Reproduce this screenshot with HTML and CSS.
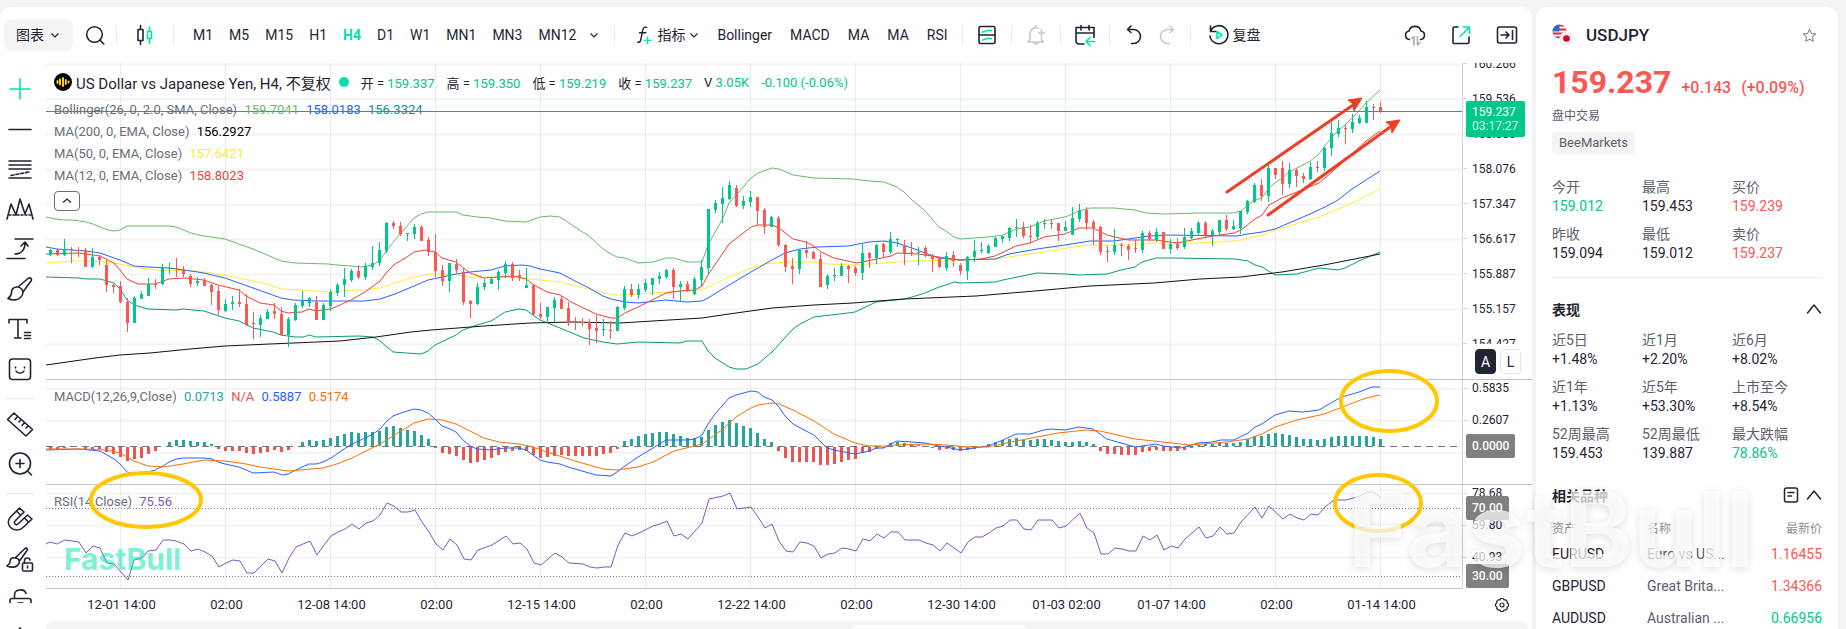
FILE: index.html
```html
<!DOCTYPE html>
<html lang="zh-CN">
<head>
  <meta charset="UTF-8" />
  <meta name="viewport" content="width=device-width, initial-scale=1.0"/>
  <title>USDJPY | FastBull</title>
  <link rel="stylesheet" href="styles.css">
</head>
<body>
  <div class="page">
    <main class="card main">
      <header class="toolbar">
        <button class="btn type-btn" type="button">图表 <svg class="chev" viewBox="0 0 10 10"><path d="M1.5 3.5 5 7l3.5-3.5"/></svg></button>
        <button class="btn icon-btn search-btn" type="button" aria-label="Search">
          <svg class="ico" viewBox="0 0 24 24"><circle cx="11.5" cy="11.5" r="7.8"/><path d="m17 17 3.8 4"/></svg>
        </button>
        <span class="sep"></span>
        <button class="btn icon-btn candle-btn" type="button" aria-label="Chart style">
          <svg class="ico" viewBox="0 0 24 24"><path d="M5 6.500h5v11H5zM7.500 2.500v4M7.500 17.500v4"/><path class="accent" d="M14.500 8.500h4v7h-4zM16.500 4v4.500M16.500 15.500v5"/></svg>
        </button>
        <span class="sep"></span>
        <nav class="group periods">
          <button class="btn" type="button">M1</button>
          <button class="btn" type="button">M5</button>
          <button class="btn" type="button">M15</button>
          <button class="btn" type="button">H1</button>
          <button class="btn active" type="button">H4</button>
          <button class="btn" type="button">D1</button>
          <button class="btn" type="button">W1</button>
          <button class="btn" type="button">MN1</button>
          <button class="btn" type="button">MN3</button>
          <button class="btn" type="button">MN12</button>
          <button class="btn more-btn" type="button" aria-label="More periods"><svg class="chev" viewBox="0 0 10 10"><path d="M1.500 3.500 5 7l3.500-3.500"/></svg></button>
        </nav>
        <span class="sep"></span>
        <div class="group indicators">
          <button class="btn fx-btn" type="button">
            <svg class="ico fx" viewBox="0 0 20 24"><path d="M13 3.500c-3-1-4 .8-4.600 4L6.500 17c-.5 2.500-1.500 3.500-3.500 3M5 9.500h7"/><path class="accent" d="M14 14.500v7M10.500 18h7"/></svg>
            指标 <svg class="chev" viewBox="0 0 10 10"><path d="M1.500 3.500 5 7l3.500-3.500"/></svg>
          </button>
          <button class="btn" type="button">Bollinger</button>
          <button class="btn" type="button">MACD</button>
          <button class="btn" type="button">MA</button>
          <button class="btn" type="button">MA</button>
          <button class="btn" type="button">RSI</button>
        </div>
        <span class="sep"></span>
        <button class="btn icon-btn" type="button" aria-label="Templates">
          <svg class="ico" viewBox="0 0 24 24"><rect x="4" y="3.500" width="16" height="17" rx="1.500"/><path d="M4 12h16"/><path class="accent" d="M7.500 9c3 0 2.500-1.500 4.500-1.500h4.500M7.500 17c3 0 2.500-1.500 4.500-1.500h4.500"/></svg>
        </button>
        <span class="sep"></span>
        <button class="btn icon-btn" type="button" aria-label="Add alert" disabled>
          <svg class="ico" viewBox="0 0 24 24"><path d="M14 5.200A5.800 5.800 0 0 0 6 10.500V17l-2 2h15.500l-2-2v-2.500M11.700 4.500V2.500M9.500 19.500c.5 2 4 2 4.500 0M17.500 7v6M14.500 10h6"/></svg>
        </button>
        <span class="sep"></span>
        <button class="btn icon-btn" type="button" aria-label="Go to date">
          <svg class="ico" viewBox="0 0 24 24"><path d="M11 21H6a3 3 0 0 1-3-3V4.500h18v10M3 10h18M8 2.500v4.500M16 2.500v4.500"/><path class="accent" d="M21.500 18.500h-8M17 14.500l-4 4 4 4"/></svg>
        </button>
        <span class="sep"></span>
        <button class="btn undo-btn" type="button" aria-label="Undo">
          <svg class="ico" viewBox="0 0 24 24"><path d="M9 3 5.500 6.500 9 9.500M5.500 6.500h6a7 7 0 0 1 0 14H9.500"/></svg>
        </button>
        <button class="btn undo-btn" type="button" aria-label="Redo" disabled>
          <svg class="ico" viewBox="0 0 24 24"><path d="m15 3 3.500 3.500L15 9.500M18.500 6.500h-6a7 7 0 0 0 0 14h2"/></svg>
        </button>
        <span class="sep"></span>
        <button class="btn replay-btn" type="button">
          <svg class="ico" viewBox="0 0 24 24"><path d="M3.500 8.500A9 9 0 1 1 3 13M3.500 3v5.500H9" /><path class="accent" d="M10 8.500v7l5-3.500z"/></svg>
          复盘
        </button>
        <div class="toolbar-right">
          <button class="btn" type="button" aria-label="Cloud">
            <svg class="ico" viewBox="0 0 24 24"><path d="M6.500 16.500a4.300 4.300 0 0 1-.5-8.500 6.200 6.200 0 0 1 12 0 4.300 4.300 0 0 1-.5 8.500"/><path class="muted" d="M9 15.500 11 13.500V22M14.500 13.500V22l2.500-2.500"/></svg>
          </button>
          <button class="btn" type="button" aria-label="Open in new window">
            <svg class="ico" viewBox="0 0 24 24"><path d="M9 4H5.500A1.500 1.500 0 0 0 4 5.500v13A1.500 1.500 0 0 0 5.500 20.500h13a1.500 1.500 0 0 0 1.500-1.500v-5"/><path class="accent" d="M14 4h6.500v6.500M20 4.500l-9 9"/></svg>
          </button>
          <button class="btn" type="button" aria-label="Collapse side panel">
            <svg class="ico" viewBox="0 0 24 24"><rect x="2.500" y="4" width="19" height="16" rx="2"/><path d="M6 12h8M11 9l3 3-3 3M17.500 7.500v9"/></svg>
          </button>
        </div>
      </header>

      <div class="workspace">
        <aside class="tools">
          <div class="tools-list">
            <button class="tool" type="button" aria-label="Cross"><svg class="ico" viewBox="0 0 28 28"><path class="accent" d="M14 4v20M4 14h20"/></svg></button>
            <button class="tool" type="button" aria-label="Line"><svg class="ico" viewBox="0 0 28 28"><path d="M3 14.500h22"/></svg></button>
            <button class="tool" type="button" aria-label="Fibonacci"><svg class="ico" viewBox="0 0 28 28"><path d="M3 6h22M3 10h22M3 14h22M3 23h22"/><path stroke-dasharray="3 2" d="M5 20.500 23 17"/></svg></button>
            <button class="tool" type="button" aria-label="Pattern"><svg class="ico" viewBox="0 0 28 28"><path d="M1 24 5 9l5 11 4-16 5 15 4-10 4 15"/><path stroke-dasharray="2 2" d="M3 20h22"/></svg></button>
            <button class="tool" type="button" aria-label="Arrow"><svg class="ico" viewBox="0 0 28 28"><path d="M9 4h18M1 23.500h18M9 19c6 0 10-4 10-11M15 11l4-4 3 4"/></svg></button>
            <button class="tool" type="button" aria-label="Brush"><svg class="ico" viewBox="0 0 28 28"><path d="M12 12 22 3.500c2-1.500 4.500 0 3 2.500L17 17M12 12c-4.500-.5-6.500 2.500-6.500 5.500S4 22 2 23.500c5 2.500 10 1.500 12.500-1 2-2 2.500-4 2.500-5.500-.5-2.500-2.500-4.500-5-5z"/></svg></button>
            <button class="tool" type="button" aria-label="Text"><svg class="ico" viewBox="0 0 28 28"><path d="M3 8V4.500h18V8M12 4.500V23M8.500 23h6.500M18.500 17.500h6M18.500 20.500h6M18.500 23.500h6"/></svg></button>
            <button class="tool" type="button" aria-label="Sticker"><svg class="ico" viewBox="0 0 28 28"><rect x="3.500" y="4" width="21" height="20.500" rx="3"/><path d="M9.500 12v1M18.500 12v1M10 16c1.500 3 6.500 3 8 0"/></svg></button>
            <hr class="tool-sep">
            <button class="tool" type="button" aria-label="Ruler"><svg class="ico" viewBox="0 0 28 28"><path d="M8 3 26.500 19.500 20 26 1.500 9.500zM11.500 6.500 9 9.500M15 9.500l-2 2.500M18.500 12.500 16 15.500M22 16l-2 2"/></svg></button>
            <button class="tool" type="button" aria-label="Zoom in"><svg class="ico" viewBox="0 0 28 28"><circle cx="14" cy="13.500" r="10.500"/><path d="m21.500 21 4 4M14 9.500v8M10 13.500h8"/></svg></button>
            <hr class="tool-sep">
            <button class="tool" type="button" aria-label="Magnet"><svg class="ico" viewBox="0 0 28 28"><path d="M13.500 3 5 11.500C1 15.500 2 20 4.500 22.500S13 26.500 17 22.500L26 14l-4.500-4-9 8.500c-1.500 1.500-2.500 1.500-3.500.5s-1-2 .5-3.500L18 7zM10.500 6l4 4M18.500 13l4 4"/></svg></button>
            <button class="tool" type="button" aria-label="Lock brush"><svg class="ico" viewBox="0 0 28 28"><path d="M9 13 19 3.500c1.500-1 3 0 2 2L13.500 16M9 13c-4-1-5 2-5 4s-1.500 3-3 4c5 2 8.500 1 10.500-.5 2-2 2-3 2-4.500-.5-1.500-2.500-3-4.500-3z"/><rect x="16.500" y="18" width="10" height="8" rx="1"/><path d="M18.500 18v-2.500c0-3 5-3.500 5.500-.5M21.500 21v2"/></svg></button>
            <button class="tool" type="button" aria-label="Unlock"><svg class="ico" viewBox="0 0 28 28"><path d="M4 30V15.500q0-2 2-2h17q2 0 2 2V30M8.500 13.500V10c0-6 10-7 11.500-1.500M12 18h5"/></svg></button>
          </div>
          <button class="tool tool-last" type="button" aria-label="Show drawings"><svg class="ico" viewBox="0 0 28 28"><path d="M11 9l3-4 3 4"/></svg></button>
        </aside>

        <section class="chart">
          <div class="panes">
            <svg class="plot" id="plot" viewBox="46 63 1416 526" preserveAspectRatio="none"></svg>

            <div class="legend legend-price">
              <div class="legend-title">
                <svg class="broker" viewBox="0 0 18 18"><circle cx="9" cy="9" r="9"/><path d="M3.500 8v2M6 6.500v5M9 5v8M11.800 7v4M14.500 8.500v1"/></svg>
                <span class="name">US Dollar vs Japanese Yen, H4, 不复权</span>
                <i class="live"></i>
                <span class="quote">开 = <b>159.337</b></span>
                <span class="quote">高 = <b>159.350</b></span>
                <span class="quote">低 = <b>159.219</b></span>
                <span class="quote">收 = <b>159.237</b></span>
                <span class="quote">V <b>3.05K</b></span>
                <span class="quote"><b>-0.100 (-0.06%)</b></span>
              </div>
              <div class="legend-row">Bollinger(26, 0, 2.0, SMA, Close) <b class="c-upper">159.7041</b> <b class="c-blue">158.0183</b> <b class="c-lower">156.3324</b></div>
              <div class="legend-row">MA(200, 0, EMA, Close) <b class="c-black">156.2927</b></div>
              <div class="legend-row">MA(50, 0, EMA, Close) <b class="c-yellow">157.6421</b></div>
              <div class="legend-row">MA(12, 0, EMA, Close) <b class="c-red">158.8023</b></div>
              <button class="collapse" type="button" aria-label="Collapse legend"><svg class="chev" viewBox="0 0 10 10"><path d="M1 6.500 5 3l4 3.500"/></svg></button>
            </div>
            <div class="legend legend-macd">
              <div class="legend-row">MACD(12,26,9,Close) <b class="c-teal">0.0713</b> <b class="c-na">N/A</b> <b class="c-blue">0.5887</b> <b class="c-orange">0.5174</b></div>
            </div>
            <div class="legend legend-rsi">
              <div class="legend-row">RSI(14,Close) <b class="c-purple">75.56</b></div>
            </div>
            <span class="brand">FastBull</span>
            <svg class="plot marks" viewBox="46 63 1416 526" preserveAspectRatio="none">
              <path class="arrow" d="M1227 192 1356 103M1268 215 1393 125"/>
              <path class="arrow-head" d="M1362 98l-14 2 5 4 1 7zM1400 120l-14 2 5 4 1 7z"/>
              <ellipse cx="1389" cy="401" rx="48" ry="30"/>
              <ellipse cx="1378" cy="503" rx="43" ry="28"/>
              <ellipse cx="146" cy="500" rx="55" ry="27"/>
            </svg>
          </div>

          <div class="axis">
            <div class="axis-pane axis-price">
              <ul class="ticks">
                <li>160.266</li><li>159.536</li><li>158.806</li><li>158.076</li><li>157.347</li><li>156.617</li><li>155.887</li><li>155.157</li><li>154.427</li>
              </ul>
              <div class="price-tag">159.237<span>03:17:27</span></div>
              <div class="scale">
                <button class="on" type="button">A</button>
                <button type="button">L</button>
              </div>
            </div>
            <div class="axis-pane axis-sub">
              <ul class="ticks"><li>0.5835</li><li>0.2607</li><li></li></ul>
              <span class="level level-zero">0.0000</span>
            </div>
            <div class="axis-pane axis-sub">
              <ul class="ticks"><li>78.68</li><li>59.80</li><li>40.93</li></ul>
              <span class="level level-70">70.00</span>
              <span class="level level-30">30.00</span>
            </div>
          </div>

          <div class="dates">
            <span>12-01 14:00</span><span>02:00</span><span>12-08 14:00</span><span>02:00</span><span>12-15 14:00</span><span>02:00</span><span>12-22 14:00</span><span>02:00</span><span>12-30 14:00</span><span>01-03 02:00</span><span>01-07 14:00</span><span>02:00</span><span>01-14 14:00</span>
          </div>
          <button class="settings" type="button" aria-label="Settings">
            <svg class="ico" viewBox="0 0 16 16"><path d="M6.800 1.500h2.400l.8 1.400 1.700-.1 1.600 1.700-.2 1.600 1.400.9v2l-1.400.9.2 1.600-1.600 1.700-1.700-.1-.8 1.400H6.800L6 13.100l-1.700.1-1.600-1.700.2-1.600L1.500 9V7l1.400-.9-.2-1.600 1.600-1.700 1.700.1z"/><circle cx="8" cy="8" r="2"/></svg>
          </button>
          <div class="bottom-panel"><div class="bottom-tab"></div></div>
        </section>
      </div>
    </main>

    <aside class="card side">
      <div class="symbol">
        <svg class="flags" viewBox="0 0 22 22">
          <clipPath id="us"><circle cx="7.500" cy="7.500" r="7"/></clipPath>
          <g clip-path="url(#us)"><path fill="#fff" d="M0 0h15v15H0z"/><path stroke="#e0213a" stroke-width="2" d="M0 1.500h15M0 5.500h15M0 9.500h15M0 13.500h15"/><path fill="#2a6cc0" d="M0 0h7.500v7.500H0z"/></g>
          <circle cx="14.500" cy="14.500" r="7" fill="#f0f0f0"/><circle cx="14.500" cy="14.500" r="3.300" fill="#d80027"/>
        </svg>
        <h1>USDJPY</h1>
        <button class="star" type="button" aria-label="Favourite"><svg class="ico" viewBox="0 0 16 16"><path d="m8 1.500 2 4.200 4.600.6-3.400 3.200.9 4.600L8 11.900l-4.100 2.200.9-4.600L1.400 6.300 6 5.700z"/></svg></button>
      </div>
      <div class="price down"><strong>159.237</strong><span>+0.143</span><span>(+0.09%)</span></div>
      <p class="status">盘中交易</p>
      <span class="tag">BeeMarkets</span>

      <dl class="stats quotes">
        <div><dt>今开</dt><dd class="up">159.012</dd></div>
        <div><dt>最高</dt><dd>159.453</dd></div>
        <div><dt>买价</dt><dd class="down">159.239</dd></div>
        <div><dt>昨收</dt><dd>159.094</dd></div>
        <div><dt>最低</dt><dd>159.012</dd></div>
        <div><dt>卖价</dt><dd class="down">159.237</dd></div>
      </dl>

      <div class="section-head perf-head">
        <h2>表现</h2>
        <button type="button" aria-label="Collapse"><svg class="ico" viewBox="0 0 16 16"><path d="m1.500 12 6.500-8 6.500 8"/></svg></button>
      </div>
      <dl class="stats">
        <div><dt>近5日</dt><dd>+1.48%</dd></div>
        <div><dt>近1月</dt><dd>+2.20%</dd></div>
        <div><dt>近6月</dt><dd>+8.02%</dd></div>
        <div><dt>近1年</dt><dd>+1.13%</dd></div>
        <div><dt>近5年</dt><dd>+53.30%</dd></div>
        <div><dt>上市至今</dt><dd>+8.54%</dd></div>
        <div><dt>52周最高</dt><dd>159.453</dd></div>
        <div><dt>52周最低</dt><dd>139.887</dd></div>
        <div><dt>最大跌幅</dt><dd class="up">78.86%</dd></div>
      </dl>

      <div class="section-head related-head">
        <h2>相关品种</h2>
        <button type="button" aria-label="List"><svg class="ico" viewBox="0 0 16 16"><rect x="1.500" y="1" width="13" height="14" rx="2"/><path d="M5 5.500h6M5 9h3.500"/></svg></button>
        <button type="button" aria-label="Collapse"><svg class="ico" viewBox="0 0 16 16"><path d="m1.500 12 6.500-8 6.500 8"/></svg></button>
      </div>
      <table class="related">
        <thead><tr><th>资产</th><th>名称</th><th>最新价</th></tr></thead>
        <tbody>
          <tr><td>EURUSD</td><td>Euro vs US...</td><td class="down">1.16455</td></tr>
          <tr><td>GBPUSD</td><td>Great Brita...</td><td class="down">1.34366</td></tr>
          <tr><td>AUDUSD</td><td>Australian ...</td><td class="up">0.66956</td></tr>
        </tbody>
      </table>
    </aside>
  </div>
  <div class="watermark" aria-hidden="true">FastBull</div>
  <script src="chart.js"></script>
</body>
</html>
```

FILE: styles.css
```css
* {
  box-sizing: border-box;
}

body {
  margin: 0;
  height: 100vh;
  overflow: hidden;
  position: relative;
  background: #f4f4f4;
  color: #1f2533;
  font-family: Roboto, "Noto Sans CJK SC", sans-serif;
  font-size: 14px;
}

button {
  font: inherit;
  color: inherit;
  background: none;
  border: none;
  padding: 0;
  cursor: pointer;
}

button:disabled {
  color: #c6c9d0;
}

ul, dl, dd, p, h1, h2 {
  margin: 0;
  padding: 0;
}

.page {
  display: flex;
  gap: 4px;
  height: 100%;
  padding: 7px 8px 0 0;
}

.card {
  background: #fff;
  border-radius: 12px 12px 0 0;
}

.main {
  flex: 1;
  min-width: 0;
  display: flex;
  flex-direction: column;
  overflow: hidden;
}

.ico {
  display: block;
  width: 24px;
  height: 24px;
  fill: none;
  stroke: currentColor;
  stroke-width: 1.6;
  stroke-linecap: round;
  stroke-linejoin: round;
}

.ico .accent {
  stroke: #00e5b0;
}

.ico .muted {
  stroke: #a8abb2;
}

.chev {
  width: 10px;
  height: 10px;
  fill: none;
  stroke: currentColor;
  stroke-width: 1.2;
}

/* toolbar */
.toolbar {
  display: flex;
  align-items: center;
  height: 56px;
  padding: 0 13px 0 4px;
}

.btn {
  display: flex;
  align-items: center;
  gap: 6px;
  line-height: 32px;
  white-space: nowrap;
}

.type-btn {
  padding: 0 13px 0 12px;
  border-radius: 8px;
  background: #f4f4f4;
}

.icon-btn {
  width: 48px;
  justify-content: center;
}

.search-btn {
  width: 43px;
}

.candle-btn {
  width: 56px;
}

.sep {
  width: 1px;
  height: 20px;
  background: #ececef;
}

.group {
  display: flex;
  gap: 16px;
}

.periods {
  padding: 0 15px 0 19px;
}

.periods .active {
  color: #00e0ac;
  font-weight: 700;
}

.more-btn {
  margin-left: -3px;
}

.indicators {
  gap: 18px;
  padding: 0 14px 0 20px;
}

.fx-btn {
  gap: 4px;
}

.fx {
  width: 18px;
  height: 22px;
}

.undo-btn {
  width: 33px;
  justify-content: center;
}

.sep + .undo-btn {
  margin-left: 8px;
}

.undo-btn + .sep {
  margin-left: 6px;
}

.replay-btn {
  gap: 2px;
  padding-left: 16px;
}

.toolbar-right {
  display: flex;
  gap: 22px;
  margin-left: auto;
}

/* drawing tools */
.workspace {
  display: flex;
  flex: 1;
  min-height: 0;
}

.tools {
  width: 46px;
  flex: none;
}

.tools-list {
  height: 540px;
  padding-top: 6px;
  overflow: hidden;
}

.tool {
  display: flex;
  align-items: center;
  justify-content: center;
  width: 40px;
  height: 40px;
}

.tool .ico {
  width: 28px;
  height: 28px;
}

.tool-last {
  margin-top: 14px;
}

.tool-sep {
  width: 28px;
  margin: 9px 6px 5px;
  border: none;
  border-top: 1px solid #e8e8eb;
}

/* chart */
.chart {
  flex: 1;
  min-width: 0;
  display: grid;
  grid-template-columns: 1fr 70px;
  grid-template-rows: 526px 32px 1fr;
}

.panes {
  position: relative;
}

.plot {
  display: block;
  width: 100%;
  height: 526px;
  fill: none;
}

.plot .grid {
  stroke: #000;
  stroke-opacity: 0.07;
}

.plot .grid-h {
  stroke: #f4f4f5;
  stroke-width: 2;
}

.plot .divider {
  stroke: #c2c4ca;
}

.plot .up {
  fill: #00c78a;
}

.plot .down {
  fill: #fb5854;
}

.plot .bar-up {
  fill: #26a69a;
}

.plot .bar-down {
  fill: #ef5350;
}

.plot .upper {
  stroke: #66bb6a;
}

.plot .middle {
  stroke: #2962ff;
}

.plot .lower {
  stroke: #089981;
}

.plot .ma200 {
  stroke: #111;
}

.plot .ma50 {
  stroke: #ffeb3b;
}

.plot .ma12 {
  stroke: #f23f35;
}

.plot .signal {
  stroke: #ff6d00;
}

.plot .rsi {
  stroke: #7e57c2;
}

.plot .zero {
  stroke: #777;
  stroke-dasharray: 7 5;
}

.plot .bound {
  stroke: #777;
  stroke-dasharray: 1 2;
}

.plot .last {
  stroke: #00b37d;
}

.marks {
  position: absolute;
  inset: 0;
  pointer-events: none;
}

.marks ellipse {
  stroke: #ffc800;
  stroke-width: 4;
}

.arrow {
  stroke: #ee3f26;
  stroke-width: 3;
  stroke-linecap: round;
}

.arrow-head {
  fill: #ee3f26;
  stroke: #ee3f26;
}

.legend {
  position: absolute;
  left: 8px;
  color: #6b6e78;
  font-size: 13px;
  white-space: nowrap;
}

.legend b {
  font-weight: 400;
  margin-left: 4px;
}

.legend-price {
  top: 5px;
}

.legend-macd {
  top: 323px;
}

.legend-rsi {
  top: 428px;
}

.legend-title {
  display: flex;
  align-items: center;
  height: 28px;
  margin-bottom: 3px;
  color: #1f2533;
}

.legend-title .name {
  margin: 0 4px;
  font-size: 15px;
}

.legend-title b {
  margin: 0;
  color: #00c78a;
}

.legend-row {
  line-height: 22px;
}

.broker {
  width: 18px;
  height: 18px;
  stroke: #f6d21b;
  stroke-width: 2;
  stroke-linecap: round;
}

.broker circle {
  fill: #000;
  stroke: none;
}

.live {
  width: 10px;
  height: 10px;
  margin-left: 4px;
  border-radius: 50%;
  background: #00e0ac;
}

.quote {
  margin-left: 12px;
}

.c-upper { color: #66bb6a; }
.c-blue { color: #2962ff; }
.c-lower { color: #089981; }
.c-black { color: #000; }
.c-yellow { color: #ffe93b; }
.c-red { color: #f23f35; }
.c-teal { color: #26a69a; }
.c-na { color: #ef5350; }
.c-orange { color: #ff6d00; }
.c-purple { color: #7e57c2; }

.collapse {
  display: flex;
  align-items: center;
  justify-content: center;
  width: 26px;
  height: 20px;
  margin-top: 4px;
  border: 1px solid #6b6e78;
  border-radius: 4px;
  background: #fff;
  color: #1f2533;
}

.brand {
  position: absolute;
  left: 18px;
  bottom: 12px;
  font: 700 30px/36px Inter, sans-serif;
  color: #00e5b0;
  opacity: 0.5;
}

/* right axis */
.axis-pane {
  position: relative;
  border-left: 1px solid #d5d6da;
  border-bottom: 1px solid #c2c4ca;
}

.axis-price {
  height: 317px;
}

.axis-sub {
  height: 105px;
  overflow: hidden;
}

.axis-sub:last-child {
  height: 104px;
  border-bottom: none;
}

.ticks {
  list-style: none;
  overflow: hidden;
  font-size: 12px;
}

.axis-price .ticks {
  height: 281px;
}

.ticks li {
  display: flex;
  align-items: center;
  gap: 5px;
  height: 32px;
}

.ticks li::before {
  content: "";
  width: 4px;
  height: 1px;
  background: #d5d6da;
}

.ticks li:first-child {
  margin-top: -8px;
}

.axis-price .ticks li {
  height: 35px;
}

.axis-price .ticks li:first-child {
  margin-top: -17px;
}

.price-tag {
  position: absolute;
  left: 3px;
  top: 38px;
  width: 59px;
  padding: 4px 0 4px 6px;
  border-radius: 2px;
  background: #00c78a;
  color: #fff;
  font-size: 12px;
  line-height: 14px;
}

.price-tag span {
  display: block;
  opacity: 0.8;
}

.scale {
  position: absolute;
  right: 11px;
  bottom: 5px;
  display: flex;
  gap: 4px;
}

.scale button {
  width: 21px;
  height: 25px;
  border: 1px solid #e2e3e6;
  border-radius: 4px;
}

.scale .on {
  background: #1f2533;
  border-color: #1f2533;
  color: #fff;
}

.level {
  position: absolute;
  left: 3px;
  padding: 0 6px;
  border-radius: 2px;
  background: #808080;
  color: #fff;
  font-size: 12px;
  font-weight: 500;
  line-height: 24px;
}

.level-zero {
  top: 54px;
}

.level-70 {
  top: 11px;
}

.level-30 {
  top: 79px;
}

/* date axis */
.dates {
  display: grid;
  grid-template-columns: repeat(13, 1fr);
  margin: 0 -70px 0 0;
  padding: 0 98px 0 23px;
  grid-area: 2 / 1;
  text-align: center;
  font-size: 13px;
  line-height: 31px;
}

.settings {
  grid-area: 2 / 2;
  justify-self: center;
  margin-left: 10px;
}

.settings .ico {
  width: 16px;
  height: 16px;
  stroke-width: 1.2;
}

.bottom-panel {
  grid-column: 1 / 3;
  margin-right: 4px;
  padding-top: 4px;
  border-radius: 8px 8px 0 0;
  background: #f4f4f4;
}

.bottom-tab {
  width: 175px;
  height: 30px;
  margin: 0 auto;
  border-radius: 6px;
  background: #fff;
  transform: translateX(152px);
}

/* side panel */
.side {
  width: 302px;
  flex: none;
  padding: 14px 16px 0;
  overflow: hidden;
}

.symbol {
  display: flex;
  align-items: center;
  height: 28px;
}

.flags {
  width: 22px;
  height: 22px;
}

.symbol h1 {
  margin-left: 12px;
  font-size: 17px;
  font-weight: 500;
}

.star {
  margin: 0 5px 0 auto;
  color: #8b8e98;
}

.star .ico {
  width: 15px;
  height: 15px;
  stroke-width: 1.2;
}

.up {
  color: #00c78a;
}

.down {
  color: #fb5854;
}

.price {
  display: flex;
  align-items: baseline;
  margin-top: 15px;
  line-height: 36px;
  white-space: nowrap;
}

.price strong {
  font-size: 32px;
  font-weight: 700;
}

.price span {
  margin-left: 10px;
  font-size: 16px;
  font-weight: 500;
}

.status {
  margin-top: 2px;
  color: #5c606c;
  font-size: 12px;
  line-height: 16px;
}

.tag {
  display: inline-block;
  margin-top: 8px;
  padding: 0 7px;
  border-radius: 3px;
  background: #f4f4f4;
  color: #5c606c;
  font-size: 13px;
  line-height: 22px;
}

.stats {
  display: grid;
  grid-template-columns: repeat(3, 1fr);
  row-gap: 9px;
}

.quotes {
  margin-top: 23px;
  padding-bottom: 15px;
  border-bottom: 1px solid #ececef;
}

.stats dt {
  color: #5c606c;
  line-height: 21px;
}

.stats dd {
  line-height: 17px;
}

.section-head {
  display: flex;
  align-items: center;
  gap: 7px;
  height: 24px;
}

.section-head h2 {
  flex: 1;
  font-size: 14px;
  font-weight: 700;
}

.section-head .ico {
  width: 16px;
  height: 16px;
  stroke-width: 1.5;
}

.perf-head {
  margin: 19px 0 9px;
}

.related-head {
  margin-top: 21px;
}

.related {
  width: 100%;
  margin-top: 13px;
  table-layout: fixed;
  border-collapse: collapse;
}

.related th {
  padding: 0;
  height: 18px;
  color: #8b8e98;
  font-size: 12px;
  font-weight: 400;
  line-height: 18px;
  text-align: left;
}

.related td {
  padding: 0;
  height: 32px;
}

.related td:nth-child(2) {
  color: #5c606c;
}

.related th:nth-child(2), .related td:nth-child(2) {
  padding-left: 5px;
}

.related th:last-child, .related td:last-child {
  text-align: right;
}

.watermark {
  position: absolute;
  right: 92px;
  bottom: 37px;
  font: 700 104px/126px Inter, sans-serif;
  color: rgba(255, 255, 255, 0.72);
  text-shadow: 0 2px 10px rgba(0, 0, 0, 0.12);
  pointer-events: none;
}
```

FILE: chart.js
```js
const plot = document.getElementById("plot");
const NS = "http://www.w3.org/2000/svg";
const FIRST = -10;
const xAt = i => 120 + (FIRST + i) * 7;

// direction, high, body top, body bottom, low
const candles = `
+249,250,255,256 -249,250,255,256 +239,249,255,256 -247,249,250,263 -247,250,251,257
-248,250,267,267 +248,257,267,268 -255,257,260,265 -260,265,285,292 -284,285,287,293
-281,286,302,303 -298,302,323,332 +296,298,323,323 +291,294,299,299 +278,284,296,296
-279,284,285,289 +264,268,284,285 +263,268,269,274 -258,268,269,277 -266,269,274,277
-274,276,284,287 +277,281,283,286 -278,280,286,286 -284,285,292,305 -286,291,310,315
+299,304,311,312 +296,302,304,310 -289,302,304,307 -294,304,325,326 -312,323,324,339
+315,318,325,337 +309,312,319,319 -303,311,314,319 -307,314,335,336 +317,319,335,347
+303,305,320,321 +291,301,306,308 +297,298,303,307 -296,302,320,320 +303,305,320,320
+289,292,306,311 +283,285,293,296 +268,279,285,297 +269,271,280,282 -265,271,277,279
+263,266,277,280 +246,263,267,270 +242,250,263,266 +222,223,251,253 -221,223,226,229
-222,226,234,236 +233,233,234,241 +224,227,234,239 -225,227,241,241 -237,240,252,256
-234,252,271,277 -265,270,281,286 +263,263,281,292 -259,264,270,273 -268,272,302,305
-300,301,304,318 +283,287,304,305 +279,283,287,290 +278,279,284,284 +270,272,280,290
+261,264,273,278 -262,264,278,281 -270,275,278,281 +268,285,288,288 -284,285,314,315
-303,314,317,319 +307,307,317,323 +297,300,308,322 -296,299,309,309 -302,308,322,326
-317,321,322,330 -318,322,323,326 -319,322,329,345 -315,328,331,343 +319,329,330,336
-321,330,331,339 +306,307,331,331 +286,289,308,310 -284,289,295,297 +284,289,295,299
+279,283,290,292 +278,278,285,295 +272,276,279,284 +269,270,277,279 -268,270,287,299
+281,284,287,302 -281,284,291,292 +277,279,294,295 +260,267,280,286 +209,209,268,275
+200,203,210,213 +187,198,204,223 +181,185,199,200 -185,188,206,207 +196,201,206,209
+191,197,202,207 -197,197,211,225 -208,210,227,234 +216,217,227,227 -216,218,245,247
-244,245,267,272 -258,266,269,284 +249,250,269,274 -241,250,253,258 -251,252,259,259
-253,259,287,287 +274,276,285,289 +268,275,276,281 +263,266,276,276 -265,266,269,283
-266,268,273,276 +243,253,273,280 -252,253,258,268 +244,245,258,264 -243,244,252,257
+232,239,252,254 +238,239,240,247 -240,245,253,265 -242,252,253,256 +247,252,253,265
-246,248,256,257 -254,256,259,272 -257,258,267,268 +252,256,268,271 -251,255,261,267
-263,265,271,275 +256,257,271,280 +240,251,257,262 +242,250,251,253 +244,246,253,254
+237,238,247,247 +236,236,239,243 +227,228,238,241 +219,227,228,237 -222,227,236,238
-225,236,237,243 +221,223,237,239 +219,223,224,229 -220,223,224,229 -223,223,231,241
+221,227,231,231 +207,218,235,235 +204,210,219,222 -207,210,223,230 -220,222,228,245
-226,227,252,255 -246,251,252,262 +229,245,252,255 -243,245,246,256 -244,246,250,260
-240,248,249,253 +231,233,250,253 -231,233,239,241 +228,232,240,242 -232,232,249,249
+239,244,249,254 -238,244,248,250 +228,237,247,249 +228,231,238,239 +221,223,233,236
-221,223,235,237 +229,231,235,246 +220,220,232,236 -215,220,229,231 +220,226,229,230
+211,211,228,234 +200,201,212,214 +183,185,202,203 -179,185,196,201 +163,168,196,202
-168,168,175,179 -161,168,184,195 +163,170,184,188 -168,170,176,187 -173,176,179,183
+162,167,179,180 -161,167,168,172 +147,148,168,171 +122,133,148,156 +120,128,134,137
-125,128,129,144 +114,122,129,133 +115,118,123,124 +101,107,123,123 -104,107,108,120
-102,107,111,113`.trim().split(/\s+/);

const histogram = [
  -2, -2, -1, 0, 0, -2, -2, -2, -5, -7, -10, -14, -12, -11, -7, -4, 0, 4, 6, 6,
  5, 4, 4, 2, -2, -4, -4, -4, -6, -7, -6, -5, -3, -5, -3, 0, 4, 6, 5, 6,
  8, 10, 12, 14, 13, 14, 14, 15, 19, 20, 18, 16, 15, 11, 7, -1, -6, -7, -9, -13,
  -16, -15, -13, -11, -8, -5, -4, -3, -4, -8, -11, -10, -9, -8, -9, -9, -9, -9, -9, -7,
  -6, -2, 5, 7, 10, 12, 13, 14, 14, 12, 10, 8, 8, 9, 16, 21, 24, 26, 23, 20,
  18, 13, 7, 4, -4, -11, -15, -15, -15, -15, -18, -18, -17, -15, -13, -12, -6, -5, -2, -1,
  3, 4, 3, 2, 1, 0, -1, -3, -2, -3, -4, -3, -2, 0, 2, 4, 6, 7, 8, 6,
  6, 7, 7, 6, 5, 4, 4, 5, 4, 2, -4, -7, -7, -8, -8, -8, -5, -4, -3, -4,
  -4, -4, -3, -1, 1, 2, 2, 3, 3, 3, 4, 7, 10, 10, 12, 13, 12, 11, 9, 7,
  7, 6, 7, 9, 10, 10, 10, 10, 10, 9, 7
];

const lines = {
  upper: "46,217 55,219 65,220 72,220 86,222 93,224 100,227 108,230 114,231 120,230 127,226 142,226 169,226 176,227 191,233 204,236 211,237 225,239 239,244 253,249 267,255 281,261 295,263 328,264 337,265 351,266 360,267 373,265 380,260 387,250 395,240 407,226 414,218 421,214 428,212 456,212 463,215 477,217 491,218 505,221 526,222 540,217 550,216 560,217 575,227 589,236 603,249 611,254 617,257 625,258 638,263 653,262 666,258 674,258 687,262 702,262 708,245 723,218 729,203 738,193 751,178 758,173 772,168 779,169 786,172 793,175 814,178 853,179 869,181 884,182 897,187 904,192 912,200 918,205 925,211 939,227 946,231 954,237 960,239 988,237 1003,235 1016,229 1030,227 1044,221 1065,217 1073,214 1079,211 1090,208 1114,208 1135,210 1146,213 1165,214 1200,213 1233,213 1241,211 1248,205 1255,200 1262,198 1269,188 1275,183 1282,178 1289,172 1297,168 1310,161 1319,154 1324,147 1332,137 1338,131 1345,125 1359,111 1366,103 1380,90",
  lower: "46,277 79,278 86,279 100,279 114,283 120,289 127,300 134,305 148,309 176,310 183,309 204,311 225,318 239,321 253,328 273,332 281,335 295,337 304,337 309,335 316,337 359,336 373,337 380,341 387,347 393,352 407,353 421,354 428,351 435,345 456,335 463,330 477,325 491,321 499,316 505,312 519,309 526,310 540,320 560,328 584,338 603,342 617,344 638,342 680,343 687,341 702,341 708,351 715,358 729,367 736,369 746,369 758,364 772,352 793,329 800,324 814,317 848,313 855,312 876,302 904,299 912,297 925,293 939,287 946,285 954,282 960,283 995,282 1003,280 1037,273 1065,274 1079,275 1107,274 1121,270 1135,267 1142,262 1156,258 1173,258 1235,259 1248,261 1255,265 1262,267 1275,275 1297,274 1319,268 1338,270 1345,268 1359,261 1380,252",
  ma200: "46,365 95,358 120,355 150,353 190,349 225,346 293,343 340,341 376,337 411,332 431,330 484,326 530,323 573,322 620,323 702,318 729,314 772,308 814,305 853,303 904,299 976,296 1035,291 1090,286 1154,283 1200,279 1241,277 1282,272 1324,265 1380,254",
  ma50: "46,263 72,261 93,261 106,262 120,264 134,267 155,270 198,271 218,274 239,278 267,284 281,289 302,290 328,292 359,290 380,288 395,283 414,277 431,274 450,274 470,277 512,277 540,280 560,282 589,289 603,293 617,295 638,294 666,292 702,290 729,277 751,268 764,264 786,262 814,262 827,264 855,265 884,263 912,261 960,260 995,259 1016,256 1044,252 1073,247 1090,245 1135,245 1156,243 1192,243 1221,242 1241,240 1262,235 1282,228 1319,217 1338,209 1359,200 1366,196 1380,189",
  middle: "46,247 57,249 86,251 100,253 120,260 134,266 148,267 169,268 191,271 204,273 225,278 239,283 253,288 267,293 281,298 293,300 316,301 365,301 380,299 395,294 414,286 428,280 442,277 456,274 470,272 491,270 505,266 522,265 530,266 540,269 560,273 575,281 589,288 603,296 611,299 625,302 638,303 666,300 687,302 702,301 708,298 729,285 751,272 772,260 785,253 800,249 817,247 848,246 869,242 884,241 897,243 912,248 925,253 939,258 960,260 995,259 1009,254 1037,249 1065,245 1090,241 1114,241 1128,239 1149,236 1165,235 1237,236 1248,234 1262,232 1275,229 1289,223 1310,214 1325,207 1338,200 1352,189 1366,180 1380,171",
  ma12: "46,254 79,253 100,256 114,263 120,270 127,279 138,284 155,284 169,279 184,278 204,280 218,285 239,290 246,296 260,303 274,305 281,311 288,313 302,312 309,309 316,311 331,309 351,300 365,292 380,281 387,272 395,264 407,257 414,252 425,250 435,252 442,258 456,262 470,273 484,278 514,276 526,279 534,285 547,292 560,295 573,303 596,314 611,318 617,318 625,313 638,307 666,293 680,291 695,290 702,286 708,275 729,244 751,227 758,225 772,225 779,228 793,239 806,242 814,246 821,252 834,258 857,263 877,259 891,256 897,253 918,254 939,257 960,260 981,259 995,256 1016,246 1030,243 1044,237 1065,234 1079,228 1093,228 1107,235 1128,240 1156,240 1177,243 1192,240 1213,236 1234,233 1241,230 1255,219 1262,215 1269,205 1282,198 1297,192 1319,183 1332,172 1352,154 1366,141 1380,131",
  "middle macd": "46,450 79,449 100,451 114,459 120,464 127,472 134,474 142,474 155,470 163,466 169,462 176,459 183,458 204,458 212,459 218,462 225,464 239,467 246,470 253,473 274,472 282,475 288,474 302,467 309,464 316,464 323,462 331,458 344,449 352,444 365,438 373,434 380,429 387,421 393,416 401,413 414,409 421,410 428,413 435,419 442,426 450,429 456,432 463,440 470,446 477,449 491,450 505,448 519,448 526,450 533,455 540,460 547,462 560,464 568,467 582,471 596,475 611,476 617,472 625,466 638,457 653,448 666,440 687,440 695,439 702,435 708,424 715,414 729,398 736,395 751,391 758,392 764,397 772,400 779,407 785,416 793,424 806,431 814,435 821,442 827,448 834,450 855,454 869,451 876,448 884,448 891,444 897,441 925,443 939,446 946,447 960,450 974,448 988,446 1003,440 1016,434 1030,434 1044,430 1051,429 1065,430 1079,427 1093,429 1107,439 1121,443 1135,447 1156,444 1163,446 1181,448 1198,443 1212,442 1221,440 1234,440 1240,437 1248,433 1255,427 1262,424 1269,419 1275,415 1289,411 1303,412 1319,410 1324,407 1338,399 1345,396 1359,392 1372,387 1380,387",
  signal: "46,449 79,449 106,450 120,453 134,461 148,466 163,467 183,464 204,460 225,461 246,464 260,467 288,471 323,468 337,464 352,458 380,444 401,431 414,423 428,419 442,420 456,424 470,431 484,438 499,442 519,444 533,447 547,452 575,461 603,469 617,470 638,467 653,462 674,451 702,444 708,440 723,429 736,417 751,408 758,405 772,403 779,404 793,410 814,421 834,434 855,443 869,446 884,446 897,445 925,444 946,445 967,447 988,447 1016,441 1037,437 1058,433 1086,430 1100,431 1135,439 1163,442 1189,445 1227,442 1248,439 1262,434 1275,427 1297,420 1324,414 1345,406 1366,398 1380,395",
  rsi: "46,544 50,542 57,544 65,540 79,542 86,553 93,546 100,548 107,563 114,564 120,571 128,580 134,560 142,558 148,551 156,550 163,540 170,540 176,541 184,544 191,551 198,549 205,552 212,556 219,567 226,563 233,560 240,561 247,573 254,573 268,559 275,561 282,573 289,558 296,547 303,544 310,541 317,555 324,545 331,536 338,532 345,529 352,524 359,529 366,523 373,521 380,515 387,503 394,506 401,512 408,512 415,510 422,522 429,532 436,544 443,550 450,539 457,545 464,559 471,560 478,550 492,545 506,536 513,544 520,543 527,549 534,563 541,565 555,553 562,557 569,563 583,564 590,567 597,568 604,567 611,567 618,545 625,533 632,536 639,533 653,526 660,524 667,521 674,536 681,534 688,539 702,523 709,499 723,496 730,493 737,509 751,507 758,517 765,528 772,524 779,541 786,551 793,552 800,542 807,543 814,546 821,558 828,554 835,553 842,548 849,549 856,551 863,539 870,541 877,534 884,538 891,532 898,532 905,540 919,540 926,543 933,545 940,551 947,543 961,553 968,542 975,537 982,537 989,533 996,528 1003,526 1010,520 1017,520 1024,529 1031,530 1038,520 1052,520 1059,528 1066,526 1080,513 1087,528 1094,533 1101,554 1108,554 1115,548 1122,549 1129,551 1136,551 1143,536 1150,540 1157,535 1164,550 1171,546 1178,548 1185,539 1192,533 1199,527 1206,538 1213,536 1220,527 1227,534 1234,533 1241,522 1255,507 1262,518 1269,506 1283,519 1290,514 1297,518 1304,520 1311,514 1318,515 1325,507 1334,500 1346,500 1360,496 1367,492 1374,492 1381,498"
};

function draw(tag, attrs) {
  const el = document.createElementNS(NS, tag);
  Object.entries(attrs).forEach(([key, value]) => el.setAttribute(key, value));
  plot.appendChild(el);
}

// grid
[64.5, 99.5, 134.5, 169.5, 204.5, 239.5, 274.5, 309.5, 344.5, 388.5, 420.5, 452.5, 493.5, 525.5, 557.5].forEach(y => {
  draw("path", { class: "grid-h", d: `M46 ${y}H1462` });
});
for (let i = 0; i < 13; i++) {
  draw("path", { class: "grid", d: `M${120.5 + i * 105} 63V589` });
}
draw("path", { class: "divider", d: "M46 379.5H1462M46 484.5H1462M46 588.5H1462" });

// macd histogram
histogram.forEach((h, i) => {
  if (!h) return;
  draw("rect", {
    class: h > 0 ? "bar-up" : "bar-down",
    x: xAt(i) - 1, y: h > 0 ? 446 - h : 447, width: 3, height: Math.abs(h)
  });
});
draw("path", { class: "zero", d: "M46 446.5H1462" });
draw("path", { class: "bound", d: "M46 508.5H1462M46 576.5H1462" });

Object.entries(lines).forEach(([name, points]) => draw("polyline", { class: name, points }));

// candles
candles.forEach((row, i) => {
  const cls = row[0] === "+" ? "up" : "down";
  const [high, top, bottom, low] = row.slice(1).split(",").map(Number);
  const x = xAt(i);
  draw("rect", { class: cls, x: x, y: high, width: 1, height: Math.max(1, low - high) });
  draw("rect", { class: cls, x: x - 1, y: top, width: 3, height: Math.max(1, bottom - top) });
});

draw("path", { class: "last", d: "M46 111.5H1462" });
```
